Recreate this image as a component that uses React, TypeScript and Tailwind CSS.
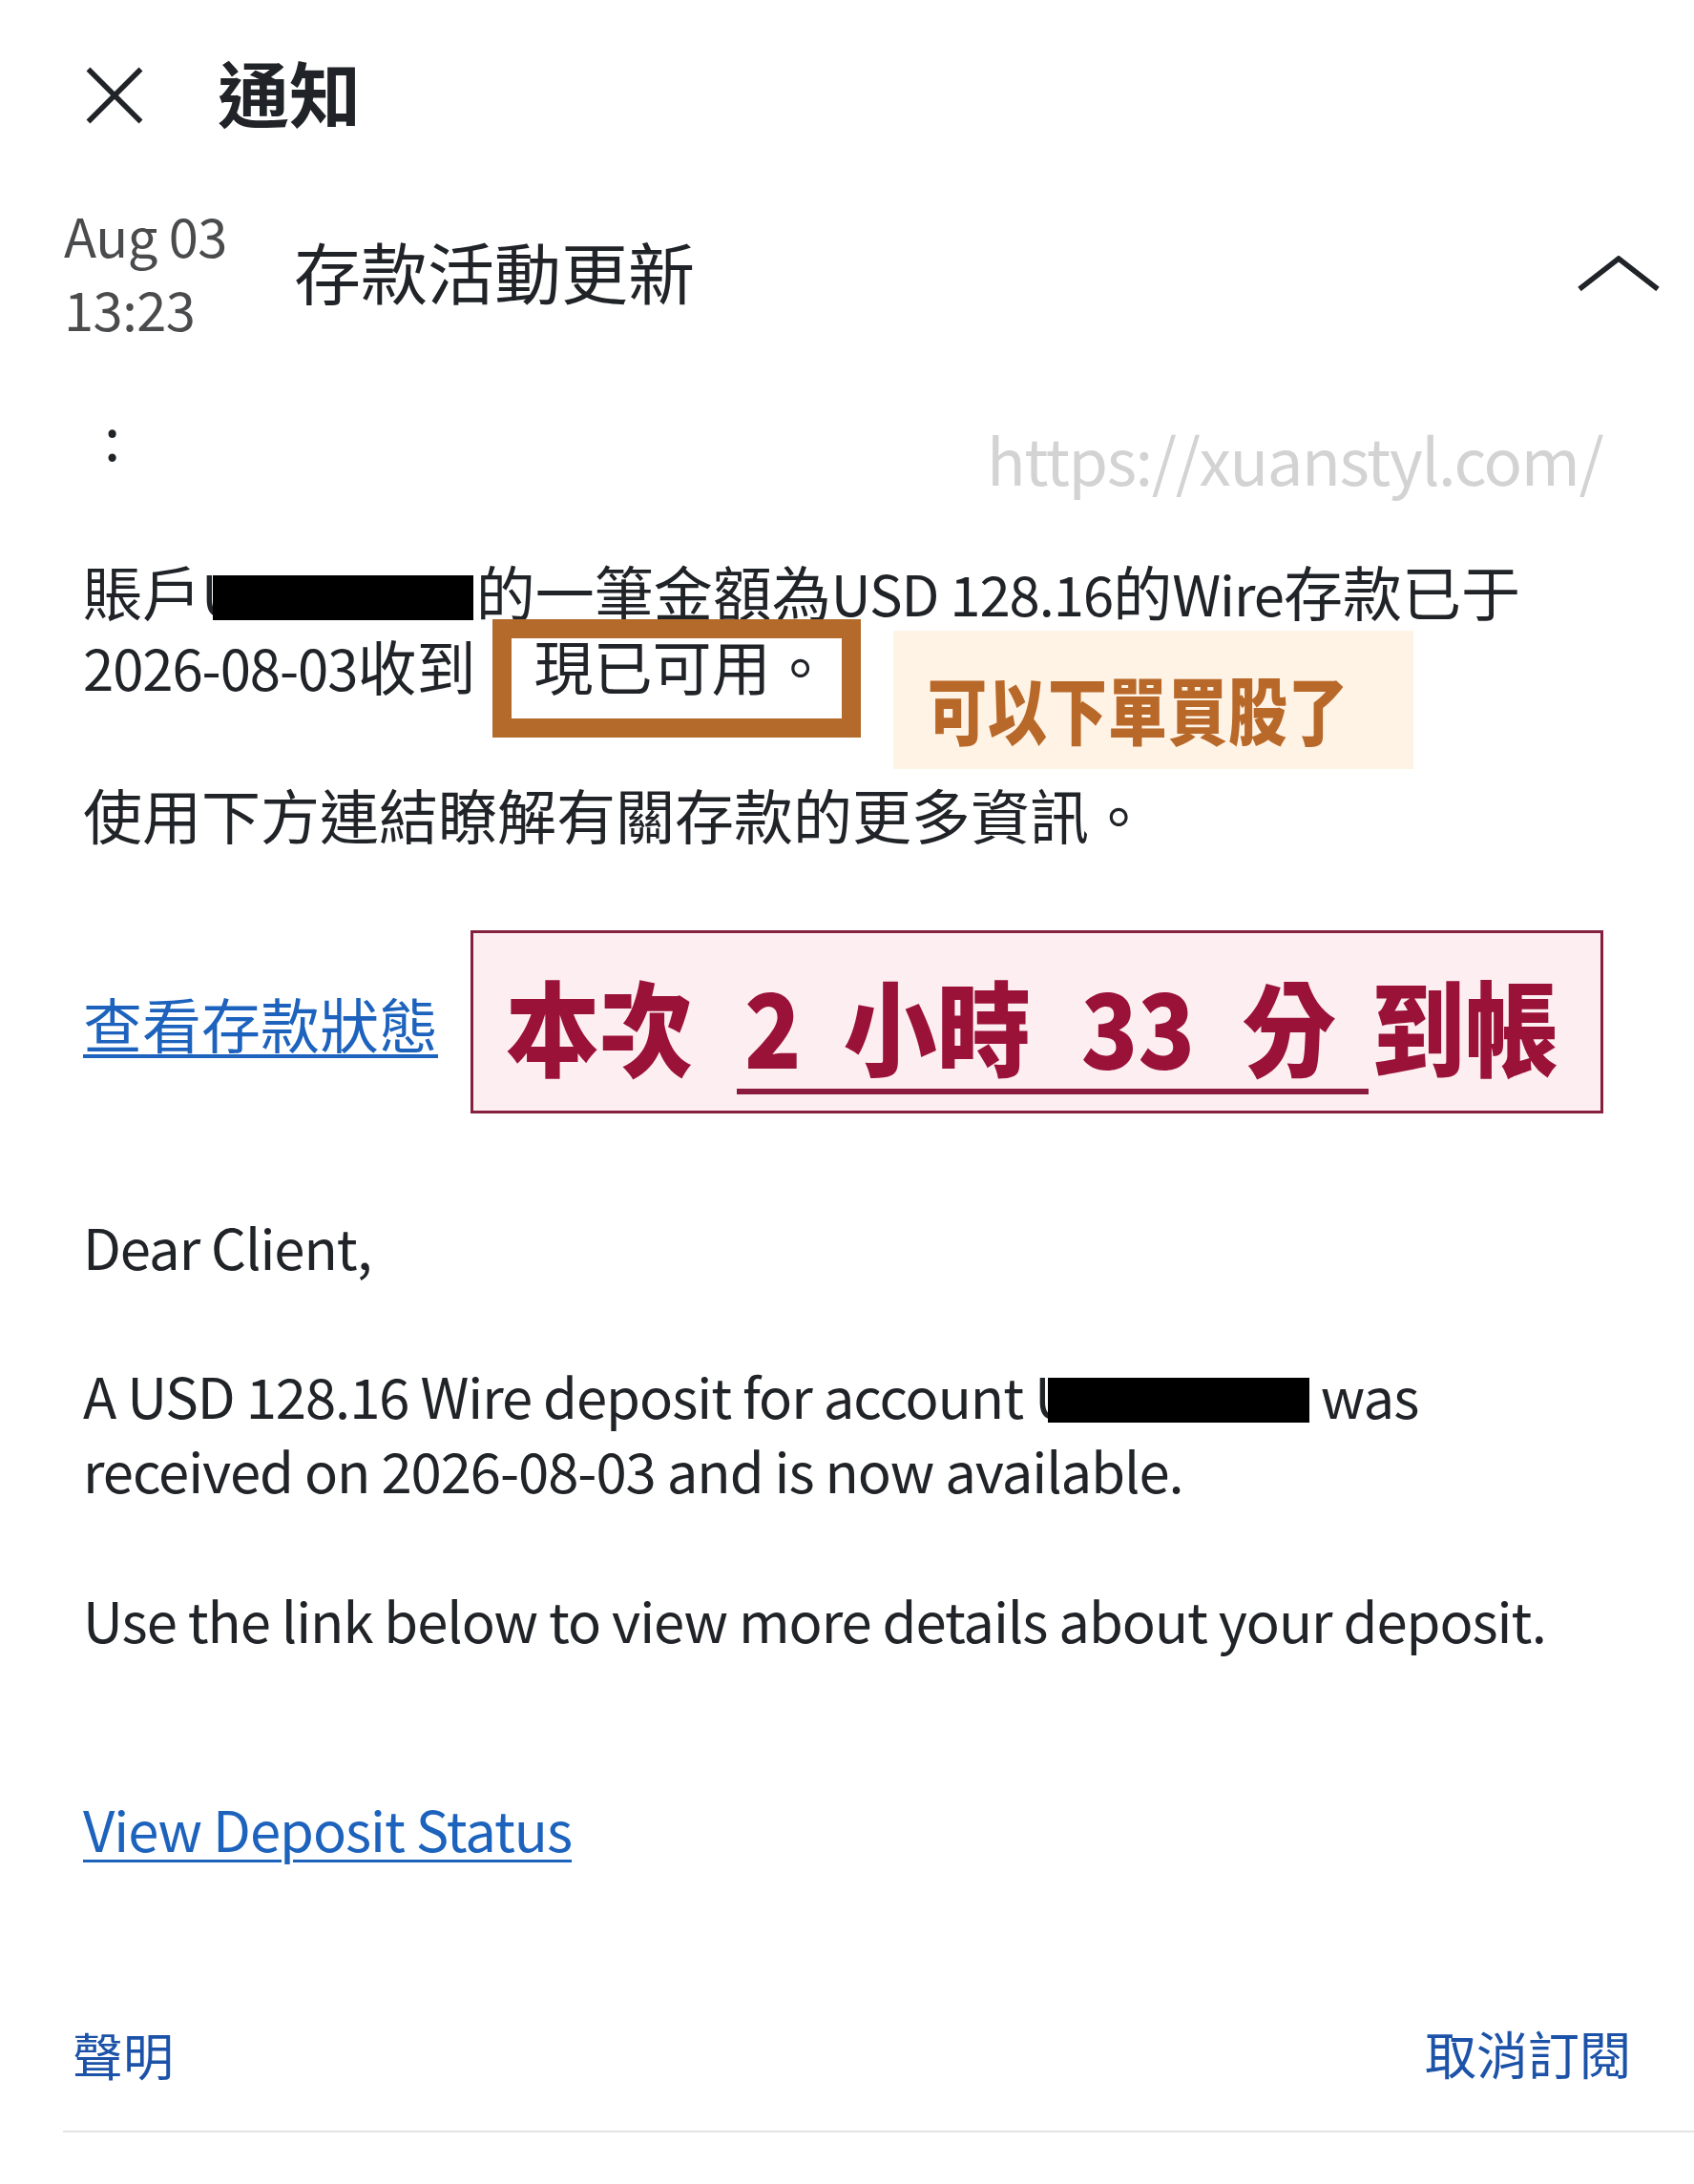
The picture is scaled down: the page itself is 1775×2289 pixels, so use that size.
import type { ReactNode } from 'react';
import { X } from 'lucide-react';

// latin runs sit a little smaller and tighter than the CJK body text
const L = ({ children }: { children: ReactNode }) => (
  <span className="text-[58px] leading-none tracking-[-1.04px]">{children}</span>
);

const Redacted = ({ width }: { width: string }) => (
  <span className={`relative inline-block h-[47px] bg-black align-[-4px] leading-none ${width}`} />
);

export default function App() {
  return (
    <div className="relative h-[2289px] w-[1775px] overflow-hidden bg-white font-['Noto_Sans_CJK_TC','Noto_Sans',sans-serif] text-[62px] leading-[78px] text-[#202327]">
      {/* Header */}
      <header className="flex h-[140px] items-center pl-[65px] pt-[60px]">
        <X className="h-[110px] w-[110px] text-[#202327]" strokeWidth={1.2} strokeLinecap="butt" />
        <h1 className="-mt-[8px] ml-[53px] text-[75px] font-bold leading-[80px]">通知</h1>
      </header>

      {/* Message title */}
      <section className="mt-[67px] flex h-[154px] items-center pl-[67px]">
        <div className="w-[241px] text-[56px] leading-[77px] tracking-[-0.5px] text-[#4a4b4d]">
          <div>Aug 03</div>
          <div>13:23</div>
        </div>
        <div className="text-[70px] leading-[84px]">存款活動更新</div>
        <svg viewBox="0 0 86 37" className="ml-auto mr-[36px] h-[37px] w-[86px] translate-y-[2px]" fill="none" stroke="#202327" strokeWidth="5.5">
          <polyline points="2,35 43,3 84,35" />
        </svg>
      </section>

      {/* Message body */}
      <main className="pl-[87px]">
        <p className="ml-[22px] mt-[56px]">:</p>
        <p className="mt-[85px]">
          賬戶<L>U</L>
          <Redacted width="w-[273px] -ml-[29px] mr-[3px]" />的一筆金額為<L>USD 128.16</L>的<L>Wire</L>存款已于
          <br />
          <L>2026-08-03</L>收到
          <span className="ml-[61px]">現已可用。</span>
        </p>
        <p className="mt-[78px]">使用下方連結瞭解有關存款的更多資訊。</p>
        <a className="mt-[141px] block text-[#1d63bd] underline decoration-[4px] underline-offset-[6px]">查看存款狀態</a>
        <p className="mt-[154px]">
          <L>Dear Client,</L>
        </p>
        <p className="mt-[78px]">
          <L>A USD 128.16 Wire deposit for account U</L>
          <Redacted width="w-[274px] -ml-[27px]" />
          <L> was</L>
          <br />
          <L>received on 2026-08-03 and is now available.</L>
        </p>
        <p className="mt-[79px]">
          <L>Use the link below to view more details about your deposit.</L>
        </p>
        <a className="mt-[141px] block text-[#1d63bd] underline decoration-[3px] underline-offset-[8px]">
          <L>View Deposit Status</L>
        </a>
      </main>

      {/* Footer */}
      <footer className="mt-[161px] flex h-[78px] items-center justify-between pl-[76px] pr-[66px] text-[53px] text-[#1c52a8]">
        <a>聲明</a>
        <a className="-mt-[3px] text-[54px]">取消訂閱</a>
      </footer>
      <div className="ml-[66px] mt-[41px] h-[2px] bg-[#e4e4e4]" />

      {/* Blog annotations pasted over the screenshot */}
      <div className="absolute left-[1034px] top-[441px] text-[67px] leading-[78px] tracking-[-1.4px] text-[#d3d3d3]">https://xuanstyl.com/</div>
      <div className="absolute left-[516px] top-[649px] h-[124px] w-[386px] border-[20px] border-[#b36a2a]" />
      <div className="absolute left-[936px] top-[661px] flex h-[145px] w-[545px] items-center bg-[#fff3e6] pl-[36px] text-[62px] font-black tracking-[1px] text-[#b8692a]">
        <span className="inline-block translate-y-[7px] scale-y-125">可以下單買股了</span>
      </div>
      <div className="absolute left-[493px] top-[975px] h-[192px] w-[1187px] border-[3px] border-[#85203f] bg-[#fdeef1]">
        <div className="flex h-[180px] translate-y-[5px] scale-y-110 items-center whitespace-pre pl-[34px] text-[98px] font-black text-[#9b1239]">
          <span>本次</span>
          <span className="ml-[54px]">2</span>
          <span className="ml-[44px]">小時</span>
          <span className="ml-[53px]">33</span>
          <span className="ml-[50px]">分</span>
          <span className="ml-[37px]">到帳</span>
        </div>
        <div className="absolute left-[276px] top-[163px] h-[6px] w-[662px] bg-[#8c1c3e]" />
      </div>
    </div>
  );
}
